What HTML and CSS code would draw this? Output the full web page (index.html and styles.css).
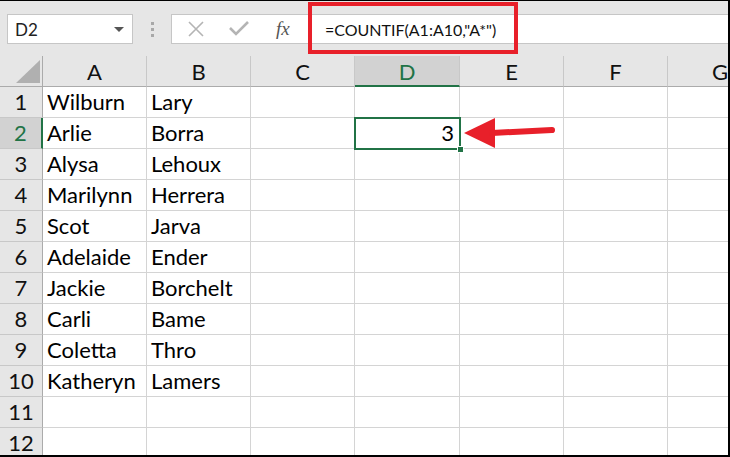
FILE: index.html
```html
<!DOCTYPE html>
<html>
<head>
<meta charset="utf-8">
<link rel="stylesheet" href="styles.css">
</head>
<body>
<div class="frame">
  <div class="toolbar">
    <div class="namebox">
      <span class="name">D2</span>
      <span class="caret"></span>
    </div>
    <div class="grip"><i></i><i></i><i></i></div>
    <div class="fbar">
      <div class="fbtns">
        <svg class="ico" width="20" height="20" viewBox="0 0 20 20"><path d="M3 3 L17 17 M17 3 L3 17" stroke="#b4b4b4" stroke-width="1.6" fill="none"/></svg>
        <svg class="ico" width="22" height="20" viewBox="0 0 22 20"><path d="M2 9 L8 15 L20 3" stroke="#b4b4b4" stroke-width="2.6" fill="none"/></svg>
        <span class="fx">fx</span>
      </div>
      <div class="formula">=COUNTIF(A1:A10,"A*")</div>
    </div>
    <div class="redbox"></div>
  </div>
  <div class="sheet">
    <div class="corner"><span class="tri"></span></div>
    <div class="ch">A</div><div class="ch">B</div><div class="ch">C</div><div class="ch sel">D</div><div class="ch">E</div><div class="ch">F</div><div class="ch last">G</div>

    <div class="rh">1</div><div class="c">Wilburn</div><div class="c">Lary</div><div class="c"></div><div class="c"></div><div class="c"></div><div class="c"></div><div class="c last"></div>
    <div class="rh sel">2</div><div class="c">Arlie</div><div class="c">Borra</div><div class="c"></div><div class="c num">3</div><div class="c"></div><div class="c"></div><div class="c last"></div>
    <div class="rh">3</div><div class="c">Alysa</div><div class="c">Lehoux</div><div class="c"></div><div class="c"></div><div class="c"></div><div class="c"></div><div class="c last"></div>
    <div class="rh">4</div><div class="c">Marilynn</div><div class="c">Herrera</div><div class="c"></div><div class="c"></div><div class="c"></div><div class="c"></div><div class="c last"></div>
    <div class="rh">5</div><div class="c">Scot</div><div class="c">Jarva</div><div class="c"></div><div class="c"></div><div class="c"></div><div class="c"></div><div class="c last"></div>
    <div class="rh">6</div><div class="c">Adelaide</div><div class="c">Ender</div><div class="c"></div><div class="c"></div><div class="c"></div><div class="c"></div><div class="c last"></div>
    <div class="rh">7</div><div class="c">Jackie</div><div class="c">Borchelt</div><div class="c"></div><div class="c"></div><div class="c"></div><div class="c"></div><div class="c last"></div>
    <div class="rh">8</div><div class="c">Carli</div><div class="c">Bame</div><div class="c"></div><div class="c"></div><div class="c"></div><div class="c"></div><div class="c last"></div>
    <div class="rh">9</div><div class="c">Coletta</div><div class="c">Thro</div><div class="c"></div><div class="c"></div><div class="c"></div><div class="c"></div><div class="c last"></div>
    <div class="rh">10</div><div class="c">Katheryn</div><div class="c">Lamers</div><div class="c"></div><div class="c"></div><div class="c"></div><div class="c"></div><div class="c last"></div>
    <div class="rh">11</div><div class="c"></div><div class="c"></div><div class="c"></div><div class="c"></div><div class="c"></div><div class="c"></div><div class="c last"></div>
    <div class="rh">12</div><div class="c"></div><div class="c"></div><div class="c"></div><div class="c"></div><div class="c"></div><div class="c"></div><div class="c last"></div>
  </div>
  <div class="selbox"><span class="handle"></span></div>
  <svg class="arrow" width="92" height="34" viewBox="0 0 92 34"><polygon points="0,17 31,2 31,32" fill="#e8202a"/><path d="M28 17 L88 14" stroke="#e8202a" stroke-width="6" stroke-linecap="round" fill="none"/></svg>
</div>
</body>
</html>
```
FILE: styles.css
```css
* { box-sizing: border-box; }
html, body { margin: 0; padding: 0; background: #fff; }
.frame {
  position: relative;
  width: 730px;
  height: 457px;
  overflow: hidden;
  border-top: 1px solid #000;
  border-right: 2px solid #000;
  border-bottom: 2px solid #000;
  font-family: "Lato", "Open Sans", sans-serif;
  color: #000;
  background: #fff;
}
.toolbar {
  height: 55px;
  background: #e6e6e6;
  display: flex;
  align-items: flex-start;
  padding-top: 13px;
  padding-left: 7px;
}
.namebox {
  width: 126px;
  height: 30px;
  background: #fff;
  border: 1px solid #c6c6c6;
  display: flex;
  align-items: center;
  justify-content: space-between;
  padding: 0 8px 0 7px;
}
.name { font-size: 17px; color: #222; }
.caret {
  width: 0; height: 0;
  border-left: 5px solid transparent;
  border-right: 5px solid transparent;
  border-top: 5px solid #555;
}
.grip {
  width: 38px;
  height: 30px;
  display: flex;
  flex-direction: column;
  align-items: center;
  justify-content: center;
  gap: 3px;
}
.grip i { display: block; width: 3px; height: 3px; background: #a8a8a8; }
.fbar {
  flex: 1;
  height: 30px;
  display: flex;
  background: #fff;
  border: 1px solid #c6c6c6;
  border-right: none;
}
.fbtns {
  width: 136px;
  display: flex;
  align-items: center;
  padding-left: 14px;
}
.ico { display: block; }
.fbtns .ico:first-child { margin-right: 22px; }
.fbtns .ico:nth-child(2) { margin-right: 26px; }
.fx {
  font-family: "Liberation Serif", serif;
  font-style: italic;
  font-size: 19px;
  color: #555;
}
.formula {
  flex: 1;
  display: flex;
  align-items: center;
  padding-left: 17px;
  font-family: "Lato", sans-serif;
  font-size: 16px;
  color: #111;
}
.redbox {
  position: absolute;
  left: 308px;
  top: 1px;
  width: 210px;
  height: 52px;
  border: 4px solid #e8202a;
}
.sheet {
  display: grid;
  grid-template-columns: 43px 104px 104px 104px 105px 104px 104px 104px;
  grid-template-rows: 31px repeat(12, 31px);
}
.corner {
  background: #e6e6e6;
  border-right: 1px solid #ababab;
  border-bottom: 1px solid #ababab;
  position: relative;
}
.tri {
  position: absolute;
  right: 2px;
  bottom: 3px;
  width: 0; height: 0;
  border-left: 24px solid transparent;
  border-bottom: 23px solid #b0b0b0;
}
.ch {
  background: #e6e6e6;
  border-right: 1px solid #c8c8c8;
  border-bottom: 1px solid #ababab;
  display: flex;
  align-items: flex-end;
  justify-content: center;
  font-size: 22px;
  line-height: 1;
  padding-bottom: 3px;
  color: #111;
}
.ch.last { border-right: none; }
.ch.sel {
  background: #d2d2d2;
  color: #217346;
  border-bottom: 2px solid #217346;
  padding-bottom: 2px;
}
.rh {
  background: #e6e6e6;
  border-right: 1px solid #ababab;
  border-bottom: 1px solid #c8c8c8;
  display: flex;
  align-items: flex-end;
  justify-content: center;
  font-size: 22px;
  line-height: 1;
  padding-bottom: 4px;
  color: #111;
}
.rh.sel {
  background: #d2d2d2;
  color: #217346;
  border-right: 2px solid #217346;
}
.c {
  border-right: 1px solid #d4d4d4;
  border-bottom: 1px solid #d4d4d4;
  display: flex;
  align-items: flex-end;
  padding: 0 0 4px 4px;
  font-size: 22px;
  line-height: 1;
  white-space: nowrap;
}
.c.last { border-right: none; }
.c.num { justify-content: flex-end; padding-right: 5px; }
.selbox {
  position: absolute;
  left: 354px;
  top: 116px;
  width: 107px;
  height: 33px;
  border: 2px solid #217346;
}
.handle {
  position: absolute;
  right: -5px;
  bottom: -5px;
  width: 7px;
  height: 7px;
  background: #217346;
  border: 1px solid #fff;
}
.arrow {
  position: absolute;
  left: 464px;
  top: 115px;
}
```
